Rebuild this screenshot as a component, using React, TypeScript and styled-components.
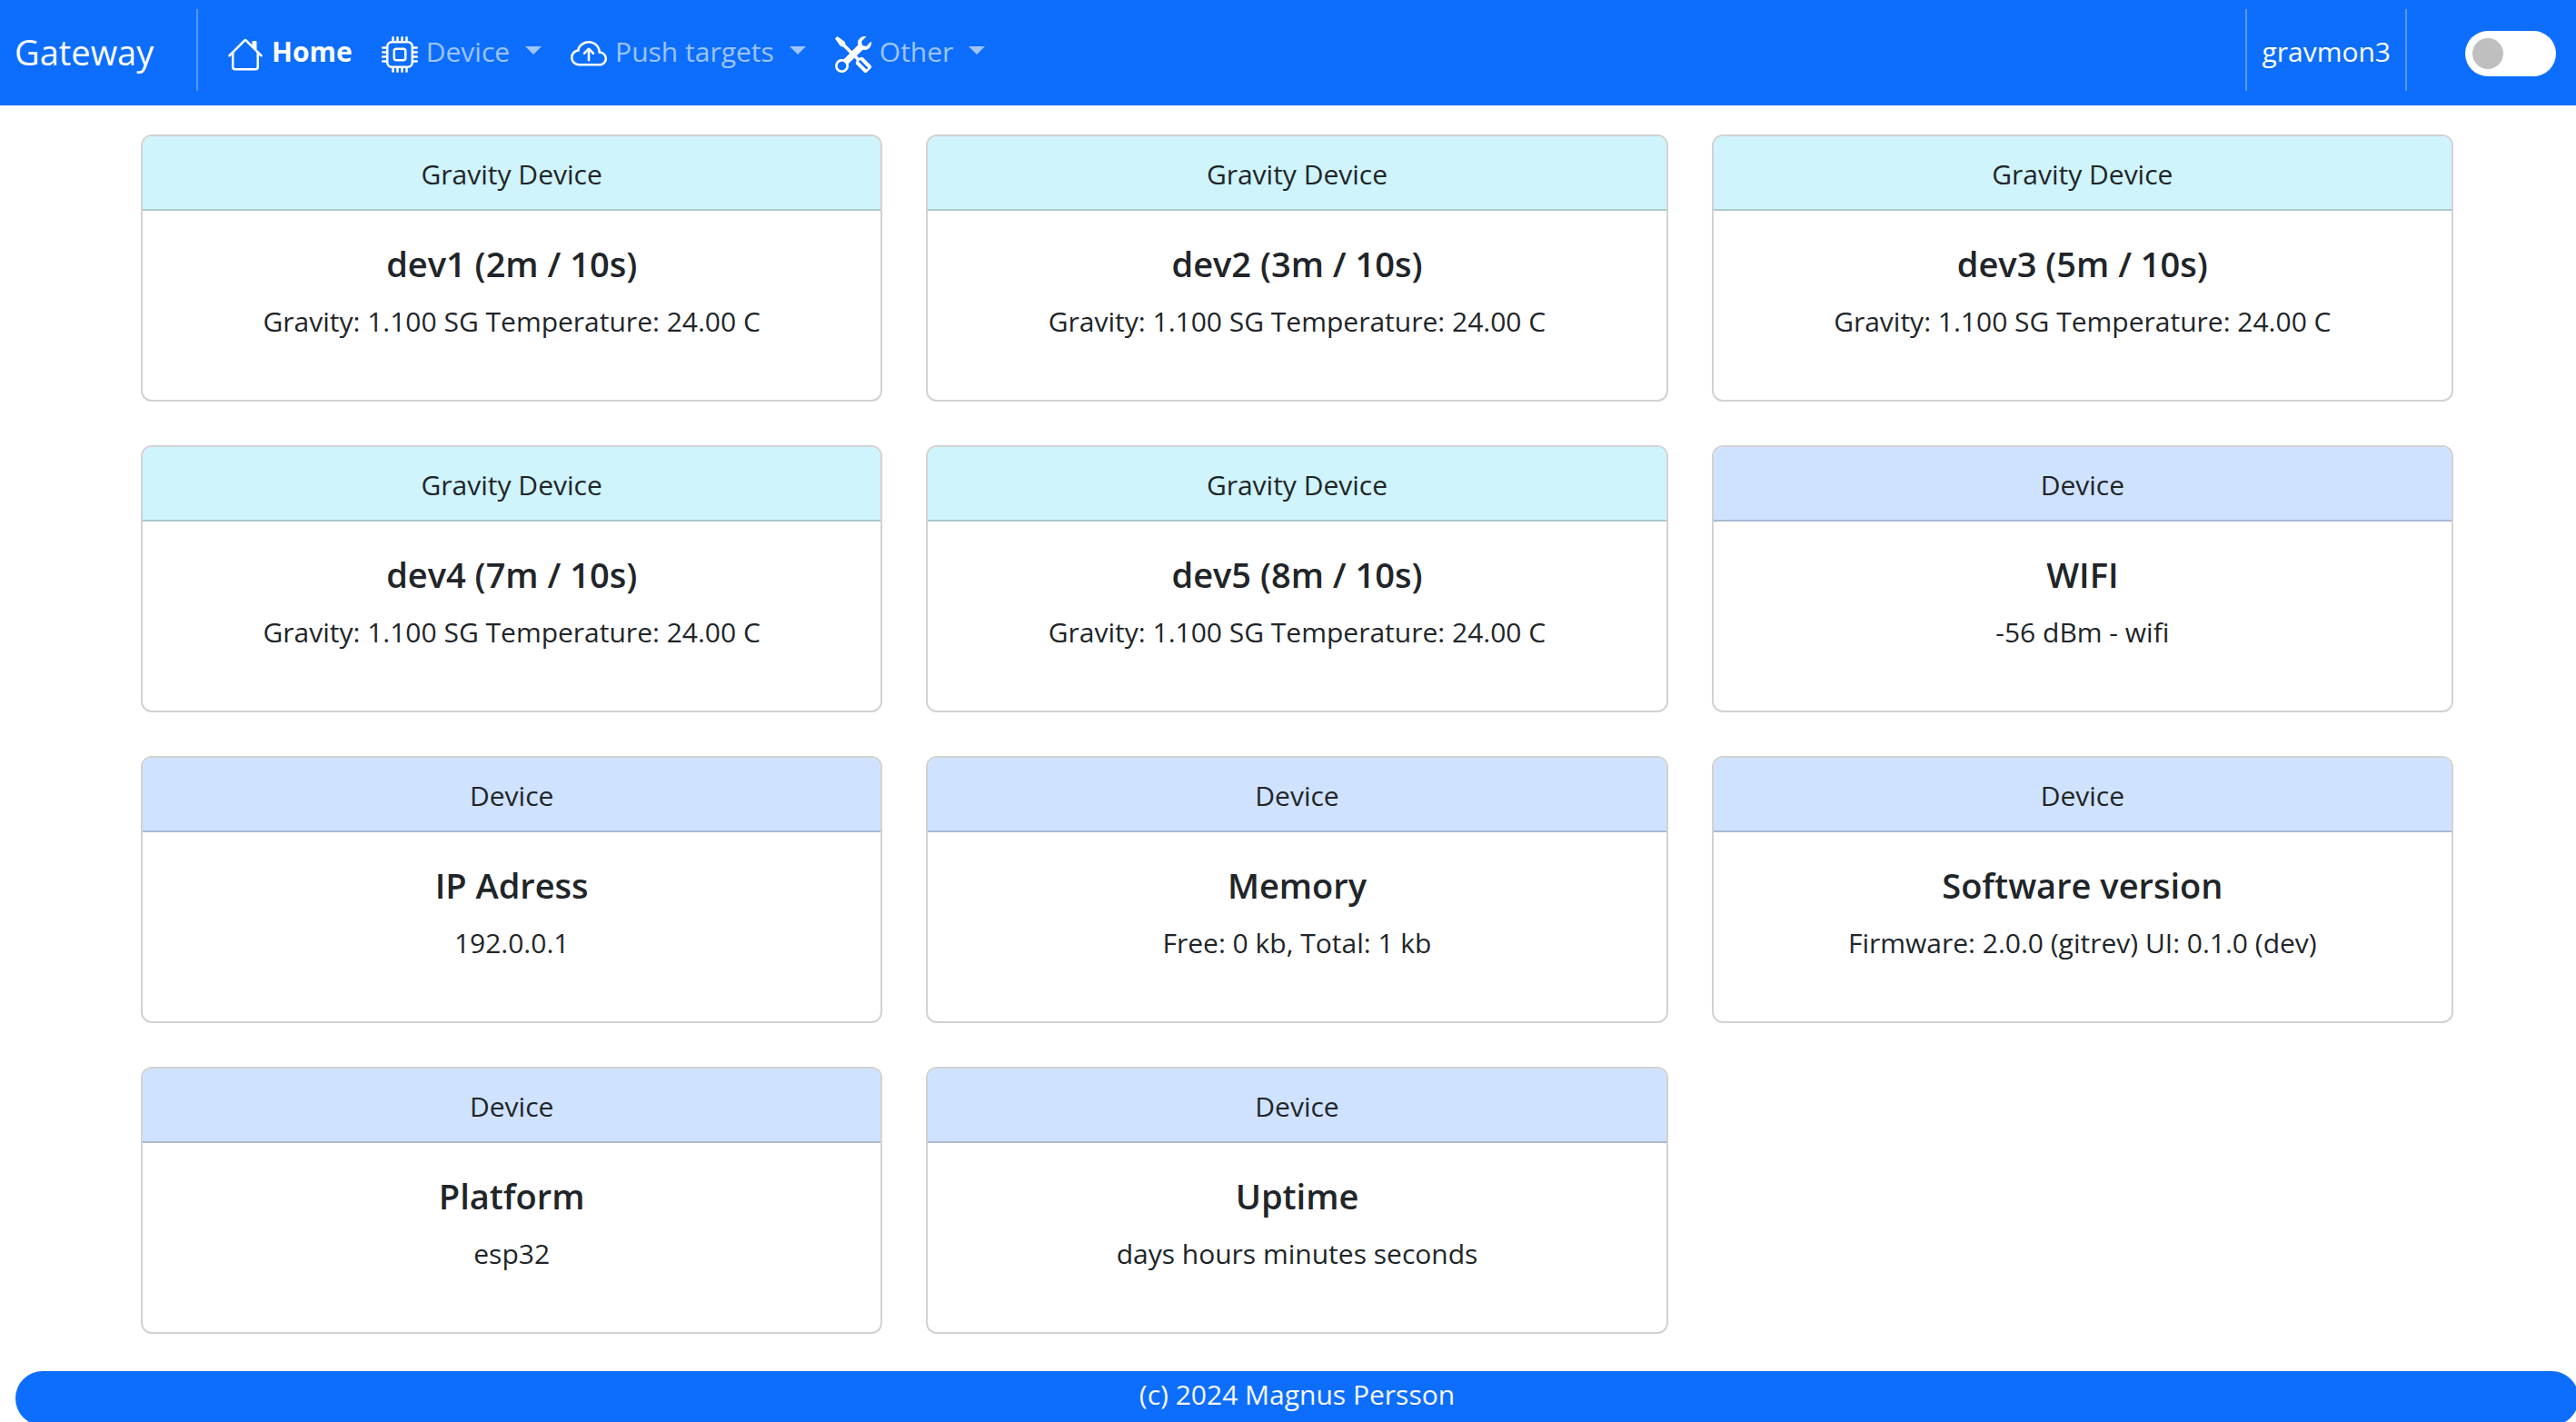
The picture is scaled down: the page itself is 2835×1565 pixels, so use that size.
import React from "react";
import styled, { createGlobalStyle } from "styled-components";
import { BsHouse, BsCpu, BsCloudArrowUp, BsTools } from "react-icons/bs";

const GlobalStyle = createGlobalStyle`
  *, *::before, *::after {
    box-sizing: border-box;
  }
  body {
    margin: 0;
    background: #ffffff;
    color: #212529;
    font-family: "Segoe UI", "Open Sans", "Noto Sans", sans-serif;
    font-size: 30px;
    line-height: 48px;
  }
`;

const Page = styled.div`
  min-height: 100vh;
  overflow: hidden;
`;

const Navbar = styled.nav`
  display: flex;
  align-items: center;
  height: 116px;
  padding: 0 22px 0 16px;
  background: #0d6efd;
`;

const Brand = styled.a`
  width: 200px;
  padding-bottom: 2px;
  color: #ffffff;
  font-size: 38px;
  line-height: 60px;
  text-decoration: none;
`;

const Divider = styled.span`
  width: 2px;
  height: 90px;
  margin-bottom: 6px;
  background: rgba(255, 255, 255, 0.3);
`;

const NavList = styled.ul`
  display: flex;
  gap: 32px;
  margin: 0;
  padding: 0 32px 2px;
  list-style: none;
`;

const navItem = `
  display: flex;
  align-items: center;
  gap: 9px;
  padding: 0;
  border: 0;
  background: none;
  font: inherit;
  text-decoration: none;
  svg {
    width: 40px;
    height: 40px;
    margin-top: 6px;
    color: #ffffff;
  }
`;

const NavLink = styled.a`
  ${navItem}
  color: #ffffff;
  font-weight: 700;
`;

const NavMenu = styled.button`
  ${navItem}
  color: rgba(255, 255, 255, 0.6);
  cursor: pointer;
  &::after {
    content: "";
    margin: 0 0 4px 8px;
    border-top: 9px solid;
    border-left: 9px solid transparent;
    border-right: 9px solid transparent;
  }
`;

const NavEnd = styled.div`
  display: flex;
  align-items: center;
  margin-left: auto;
`;

const HostLink = styled.a`
  padding: 0 16px 2px;
  color: #ffffff;
  text-decoration: none;
`;

const Switch = styled.input`
  appearance: none;
  display: flex;
  align-items: center;
  width: 100px;
  height: 50px;
  margin: 2px 0 0 64px;
  padding: 0 8px;
  border-radius: 25px;
  background: #ffffff;
  cursor: pointer;
  &::before {
    content: "";
    width: 34px;
    height: 34px;
    border-radius: 50%;
    background: #bfbfbf;
  }
  &:checked {
    justify-content: flex-end;
  }
`;

const Content = styled.div`
  margin: 0 -3px -3px 17px;
`;

const CardGrid = styled.main`
  display: grid;
  grid-template-columns: repeat(3, 1fr);
  gap: 48px;
  max-width: 2545px;
  margin: 0 auto;
  padding: 32px 0 41px;
`;

const Card = styled.section`
  display: flex;
  flex-direction: column;
  border: 2px solid #d2d2d2;
  border-radius: 12px;
  overflow: hidden;
  text-align: center;
`;

const CardHeader = styled.header<{ $tone: Tone }>`
  padding: 18px 32px 14px;
  border-bottom: 2px solid rgba(0, 0, 0, 0.175);
  background: ${({ $tone }) => ($tone === "gravity" ? "#cff4fc" : "#cfe2ff")};
`;

const CardBody = styled.div`
  padding: 34px 32px 62px;
`;

const CardTitle = styled.h5`
  margin: 0 0 16px;
  font-size: 38px;
  font-weight: 600;
  line-height: 48px;
`;

const CardText = styled.p`
  margin: 0;
`;

const Footer = styled.footer`
  height: 60px;
  padding-top: 2px;
  border-radius: 30px;
  background: #0d6efd;
  color: #f8f9fa;
  text-align: center;
`;

type Tone = "gravity" | "device";

interface CardData {
  tone: Tone;
  title: string;
  text: string;
}

const gravityDevices = [2, 3, 5, 7, 8].map<CardData>((minutes, index) => ({
  tone: "gravity",
  title: `dev${index + 1} (${minutes}m / 10s)`,
  text: "Gravity: 1.100 SG Temperature: 24.00 C",
}));

const cards: CardData[] = [
  ...gravityDevices,
  { tone: "device", title: "WIFI", text: "-56 dBm - wifi" },
  { tone: "device", title: "IP Adress", text: "192.0.0.1" },
  { tone: "device", title: "Memory", text: "Free: 0 kb, Total: 1 kb" },
  { tone: "device", title: "Software version", text: "Firmware: 2.0.0 (gitrev) UI: 0.1.0 (dev)" },
  { tone: "device", title: "Platform", text: "esp32" },
  { tone: "device", title: "Uptime", text: "days hours minutes seconds" },
];

const menus = [
  { label: "Device", Icon: BsCpu },
  { label: "Push targets", Icon: BsCloudArrowUp },
  { label: "Other", Icon: BsTools },
];

export default function App() {
  return (
    <Page>
      <GlobalStyle />
      <Navbar>
        <Brand href="#">Gateway</Brand>
        <Divider />
        <NavList>
          <li>
            <NavLink href="#" aria-current="page">
              <BsHouse />
              Home
            </NavLink>
          </li>
          {menus.map(({ label, Icon }) => (
            <li key={label}>
              <NavMenu type="button" aria-haspopup="menu">
                <Icon />
                {label}
              </NavMenu>
            </li>
          ))}
        </NavList>
        <NavEnd>
          <Divider />
          <HostLink href="#">gravmon3</HostLink>
          <Divider />
          <Switch type="checkbox" role="switch" aria-label="Dark mode" />
        </NavEnd>
      </Navbar>
      <Content>
        <CardGrid>
          {cards.map(({ tone, title, text }) => (
            <Card key={title}>
              <CardHeader $tone={tone}>{tone === "gravity" ? "Gravity Device" : "Device"}</CardHeader>
              <CardBody>
                <CardTitle>{title}</CardTitle>
                <CardText>{text}</CardText>
              </CardBody>
            </Card>
          ))}
        </CardGrid>
        <Footer>(c) 2024 Magnus Persson</Footer>
      </Content>
    </Page>
  );
}
